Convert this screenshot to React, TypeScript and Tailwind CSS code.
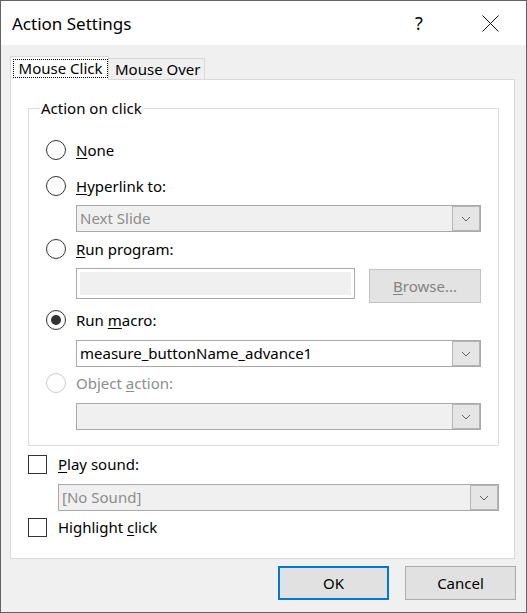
import React from 'react';

type RadioProps = { checked?: boolean; disabled?: boolean };

const Radio: React.FC<RadioProps> = ({ checked, disabled }) => (
  <span
    className={`flex h-[20px] w-[20px] shrink-0 items-center justify-center rounded-full border bg-white ${
      disabled ? 'border-[#cccccc]' : 'border-[#333333]'
    }`}
  >
    {checked && <span className="h-[10px] w-[10px] rounded-full bg-[#333333]" />}
  </span>
);

const Chevron: React.FC = () => (
  <svg width="10" height="6" viewBox="0 0 10 6" fill="none">
    <path d="M1 1 L5 5 L9 1" stroke="#606060" strokeWidth="1" />
  </svg>
);

type ComboProps = { text?: string; disabled?: boolean; className?: string };

const Combo: React.FC<ComboProps> = ({ text, disabled, className }) => (
  <div
    className={`flex h-[27px] border border-[#a9a9a9] ${disabled ? 'bg-[#f0f0f0] text-[#8d8d8d]' : 'bg-white text-black'} ${className ?? ''}`}
  >
    <div className="flex flex-1 items-center pl-[3px] leading-none">{text}</div>
    <div className="flex w-[28px] items-center justify-center border border-[#b6b6b6] bg-[#e5e5e5]">
      <Chevron />
    </div>
  </div>
);

const Check: React.FC = () => (
  <span className="h-[19px] w-[19px] shrink-0 border border-[#333333] bg-white" />
);

const App: React.FC = () => {
  return (
    <div className="flex h-[613px] w-[527px] flex-col border border-[#636363] bg-[#f0f0f0] font-['Segoe_UI','Noto_Sans',sans-serif] text-[15px] text-black">
      {/* Title bar */}
      <div className="flex h-[44px] items-center bg-white pl-[11px] pr-[13px]">
        <span className="text-[17px] leading-none">Action Settings</span>
        <span className="ml-auto flex w-[40px] justify-center text-[18px] leading-none">?</span>
        <span className="ml-[28px] flex w-[46px] justify-center">
          <svg width="17" height="17" viewBox="0 0 17 17">
            <path d="M0.5 0.5 L16.5 16.5 M16.5 0.5 L0.5 16.5" stroke="#111" strokeWidth="1" />
          </svg>
        </span>
      </div>

      <div className="flex-1 pl-[9px] pt-[11px]">
        {/* Tabs */}
        <div className="flex h-[23px] items-end">
          <div className="relative z-10 -mb-px h-[24px] w-[99px] border border-b-0 border-[#d9d9d9] bg-white pl-[2px] pt-[2px]">
            <span className="flex h-[19px] w-[95px] items-center justify-center border border-dotted border-black leading-none">
              Mouse Click
            </span>
          </div>
          <div className="flex h-[21px] w-[96px] items-center border border-b-0 border-l-0 border-[#d9d9d9] pl-[6px] leading-none">
            Mouse Over
          </div>
        </div>

        {/* Panel */}
        <div className="h-[480px] w-[505px] border border-[#d9d9d9] bg-white pl-[17px] pt-[28px]">
          <div className="relative w-[471px] border border-[#dcdcdc] pb-[15px] pl-[17px] pt-[28px]">
            <span className="absolute -top-[11px] left-[11px] bg-white px-[1px] leading-[20px]">Action on click</span>

            <div className="flex h-[26px] items-center gap-[10px]">
              <Radio />
              <span><u className="underline-offset-2">N</u>one</span>
            </div>
            <div className="mt-[10px] flex h-[26px] items-center gap-[10px]">
              <Radio />
              <span><u className="underline-offset-2">H</u>yperlink to:</span>
            </div>
            <Combo text="Next Slide" disabled className="ml-[30px] mt-[6px] w-[405px]" />

            <div className="mt-[4px] flex h-[26px] items-center gap-[10px]">
              <Radio />
              <span><u className="underline-offset-2">R</u>un program:</span>
            </div>
            <div className="ml-[30px] mt-[6px] flex h-[35px] items-start">
              <div className="h-[31px] w-[279px] border border-[#a9a9a9] bg-white p-[3px]">
                <div className="h-full w-full bg-[#f0f0f0]" />
              </div>
              <div className="ml-[14px] mt-[1px] flex h-[34px] w-[112px] items-center justify-center border border-[#c2c2c2] bg-[#e3e3e3] text-[#838383]">
                <span><u className="underline-offset-2">B</u>rowse...</span>
              </div>
            </div>

            <div className="mt-[4px] flex h-[26px] items-center gap-[10px]">
              <Radio checked />
              <span>Run <u className="underline-offset-2">m</u>acro:</span>
            </div>
            <Combo text="measure_buttonName_advance1" className="ml-[30px] mt-[7px] w-[405px]" />

            <div className="mt-[3px] flex h-[26px] items-center gap-[10px]">
              <Radio disabled />
              <span className="text-[#8d8d8d]">Object <u className="underline-offset-2">a</u>ction:</span>
            </div>
            <Combo disabled className="ml-[30px] mt-[7px] w-[405px]" />
          </div>

          <div className="mt-[5px] flex h-[26px] items-center gap-[11px]">
            <Check />
            <span><u className="underline-offset-2">P</u>lay sound:</span>
          </div>
          <Combo text="[No Sound]" disabled className="ml-[30px] mt-[7px] w-[441px]" />
          <div className="mt-[3px] flex h-[26px] items-center gap-[11px]">
            <Check />
            <span>Highlight <u className="underline-offset-2">c</u>lick</span>
          </div>
        </div>

        {/* Buttons */}
        <div className="mt-[7px] flex justify-end gap-[16px] pr-[10px]">
          <button className="flex h-[34px] w-[111px] items-center justify-center border-2 border-[#0078d7] bg-[#e1e1e1]">
            OK
          </button>
          <button className="flex h-[34px] w-[111px] items-center justify-center border border-[#adadad] bg-[#e1e1e1]">
            Cancel
          </button>
        </div>
      </div>
    </div>
  );
};

export default App;
